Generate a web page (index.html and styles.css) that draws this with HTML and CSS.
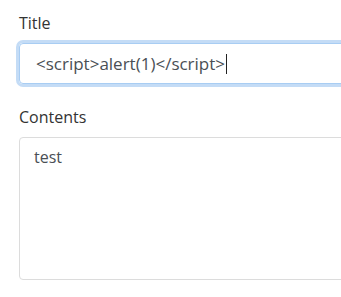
FILE: index.html
```html
<!DOCTYPE html>
<html lang="en">

<head>
    <meta charset="UTF-8" />
    <meta name="viewport" content="width=device-width, initial-scale=1.0" />
    <title>New post</title>
    <link rel="stylesheet" href="styles.css">
</head>

<body>
    <form class="post-form">
        <div class="form-group">
            <label class="form-label" for="title">Title</label>
            <div class="form-control focused" id="title">&lt;script&gt;alert(1)&lt;/script&gt;<span class="caret"></span></div>
        </div>
        <div class="form-group">
            <label class="form-label" for="contents">Contents</label>
            <div class="form-control textarea" id="contents">test</div>
        </div>
    </form>
</body>

</html>
```

FILE: styles.css
```css
body {
    margin: 0;
    font-family: "Open Sans", "Noto Sans", sans-serif;
    background-color: #fff;
}

.post-form {
    padding: 13px 0 0 19px;
    overflow: hidden;
}

.form-group {
    display: flex;
    flex-direction: column;
    margin-bottom: 23px;
}

.form-label {
    font-size: 16px;
    line-height: 20px;
    color: #333;
    margin-bottom: 10px;
}

.form-control {
    width: calc(100% + 30px);
    box-sizing: border-box;
    border: 1px solid #dcdcdc;
    border-radius: 4px;
    font-size: 16px;
    color: #4a4f55;
    padding: 0 16px;
}

.focused {
    height: 41px;
    font-size: 17px;
    line-height: 39px;
    border-color: #a8cdf3;
    box-shadow: 0 0 0 3px #c4dcf6;
    display: flex;
    align-items: center;
}

.caret {
    display: inline-block;
    width: 1px;
    height: 20px;
    background-color: #222;
    margin-left: 1px;
}

.textarea {
    height: 143px;
    padding-top: 8px;
    padding-left: 14px;
    line-height: 22px;
}
```
